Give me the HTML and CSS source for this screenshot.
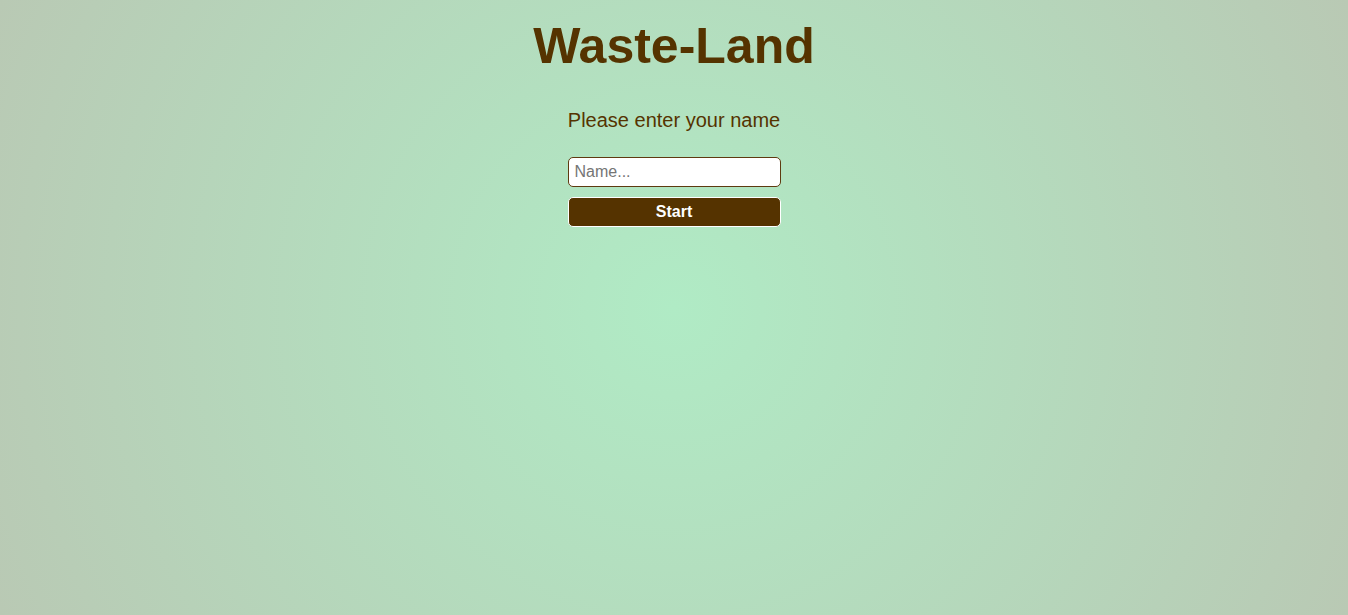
FILE: index.html
```html
<!DOCTYPE html>
<html>
<head>
<meta charset="utf-8">
<link rel="stylesheet" href="styles.css">
</head>
<body>
<main class="page">
  <h1 class="title">Waste-Land</h1>
  <p class="prompt">Please enter your name</p>
  <form class="form">
    <input class="name-input" type="text" placeholder="Name...">
    <button class="start-btn" type="button">Start</button>
  </form>
</main>
</body>
</html>
```
FILE: styles.css
```css
html, body {
  margin: 0;
  height: 100%;
}
body {
  font-family: "Liberation Sans", Arial, sans-serif;
  background: radial-gradient(circle farthest-corner at 50% 50%, #b0ebc5 0%, #b9c9b4 100%);
  color: #553300;
}
.page {
  display: flex;
  flex-direction: column;
  align-items: center;
  padding-top: 14px;
}
.title {
  font-size: 50px;
  font-weight: bold;
  margin: 0;
  line-height: 64px;
}
.prompt {
  font-size: 20px;
  margin: 30px 0 0;
  line-height: 24px;
}
.form {
  display: flex;
  flex-direction: column;
  gap: 10px;
  margin-top: 25px;
  width: 213px;
}
.name-input {
  box-sizing: border-box;
  height: 30px;
  width: 100%;
  border: 1px solid #5e3a10;
  border-radius: 5px;
  background: #fff;
  font-family: "Liberation Sans", Arial, sans-serif;
  font-size: 16px;
  padding: 0 6px;
  color: #333;
}
.name-input::placeholder {
  color: #757575;
}
.start-btn {
  box-sizing: border-box;
  height: 30px;
  width: 100%;
  border: 1px solid #fff;
  border-radius: 5px;
  background: #553300;
  color: #fff;
  font-family: "Liberation Sans", Arial, sans-serif;
  font-weight: bold;
  font-size: 16px;
  padding: 0;
}
```
